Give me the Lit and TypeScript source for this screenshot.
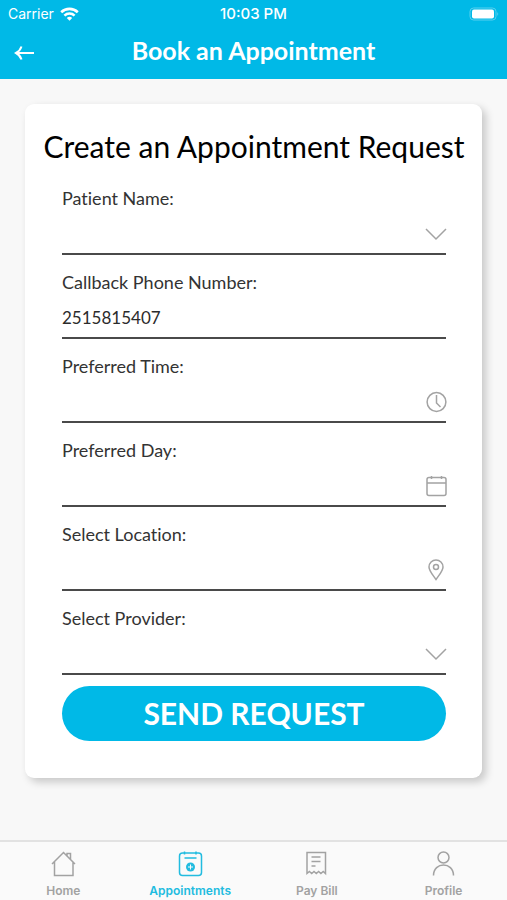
import { LitElement, html, svg, css, nothing } from "lit";
import { customElement, property, state } from "lit/decorators.js";

const icons: Record<string, unknown> = {
  chevron: svg`<path d="M1 6 11 16 21 6" />`,
  clock: svg`<circle cx="11.500" cy="11" r="9.400" /><path d="M11.500 4v8l4 4" />`,
  calendar: svg`<rect x="2" y="2.500" width="19" height="18" rx="2" /><path d="M2 8h19M6.500 1v3M16.500 1v3" />`,
  pin: svg`<path d="M11 20.500C8 16 4 12 4 8a7 7 0 0 1 14 0c0 4-4 8-7 12.500Z" /><circle cx="11" cy="8" r="2.500" />`,
};

const tabIcons: Record<string, unknown> = {
  home: svg`<path d="M2 14 13.500 2.500 25 14M4.500 12v13.500h18.500V12M17 6V3.500h3.500V9" />`,
  appointments: svg`<rect x="2.500" y="3" width="22" height="22.500" rx="3" /><path d="M7.500 1.500v3M19 1.500v3M7.500 8h12" /><circle cx="13.500" cy="17" r="4.500" fill="currentColor" stroke="none" /><path d="M13.500 14.500v5M11 17h5" stroke="#fafafa" stroke-width="1" />`,
  bill: svg`<path d="M4 23.500V2.500h18.500v21l-2.300-2-2.300 2-2.300-2-2.300 2-2.300-2-2.300 2-2.300-2ZM8.500 7h9M8.500 11.500h9M8.500 16h4" />`,
  profile: svg`<circle cx="13.500" cy="7.500" r="5.500" /><path d="M3.500 25.500c0-14 20-14 20 0" />`,
};

@customElement("request-field")
class RequestField extends LitElement {
  @property() label = "";
  @property() kind: "select" | "text" | "tel" = "text";
  @property() icon = "";
  @property() value = "";

  static styles = css`
    :host {
      display: block;
      border-bottom: 2px solid #4a4a4a;
      padding-top: 16px;
    }
    .label {
      display: block;
      font-size: 18px;
      line-height: 22px;
      color: #333;
    }
    .row {
      display: flex;
      align-items: center;
      height: 40px;
      margin-top: 4px;
    }
    .control {
      flex: 1;
      min-width: 0;
      height: 100%;
      padding: 0;
      border: 0;
      background: none;
      appearance: none;
      font: inherit;
      font-size: 17px;
      color: #2b2b2b;
      outline: none;
    }
    .icon {
      flex: none;
      width: 22px;
      height: 22px;
      fill: none;
      stroke: #a3a3a3;
      stroke-width: 1.500;
      overflow: visible;
      pointer-events: none;
    }
  `;

  render() {
    return html`
      <label class="label" for="control">${this.label}</label>
      <div class="row">
        ${this.kind === "select"
          ? html`<select class="control" id="control"><option value=""></option></select>`
          : html`<input class="control" id="control" type=${this.kind} .value=${this.value} />`}
        ${this.icon
          ? html`<svg class="icon" viewBox="-1 -1 22 22" aria-hidden="true">${icons[this.icon]}</svg>`
          : nothing}
      </div>
    `;
  }
}

@customElement("app-root")
class AppRoot extends LitElement {
  @state() active = "appointments";

  private fields = [
    { label: "Patient Name:", kind: "select", icon: "chevron", value: "" },
    { label: "Callback Phone Number:", kind: "tel", icon: "", value: "2515815407" },
    { label: "Preferred Time:", kind: "text", icon: "clock", value: "" },
    { label: "Preferred Day:", kind: "text", icon: "calendar", value: "" },
    { label: "Select Location:", kind: "select", icon: "pin", value: "" },
    { label: "Select Provider:", kind: "select", icon: "chevron", value: "" },
  ];

  private tabs = [
    { id: "home", label: "Home" },
    { id: "appointments", label: "Appointments" },
    { id: "bill", label: "Pay Bill" },
    { id: "profile", label: "Profile" },
  ];

  static styles = css`
    :host {
      display: flex;
      flex-direction: column;
      min-height: 100vh;
      background: #f8f8f8;
      font-family: Lato, "Open Sans", sans-serif;
      font-variant-ligatures: none;
      color: #000;
    }
    .top {
      background: #00b9e7;
      color: #fff;
    }
    .status,
    .bar {
      display: grid;
      grid-template-columns: 1fr auto 1fr;
      align-items: center;
    }
    .status {
      height: 28px;
      padding: 0 8px;
      font: 400 14px/20px Inter, sans-serif;
    }
    .carrier {
      display: flex;
      align-items: center;
      gap: 6px;
    }
    .wifi {
      width: 19px;
      height: 14px;
    }
    .time {
      font-size: 15px;
      font-weight: 500;
    }
    .battery {
      width: 30px;
      height: 14px;
      justify-self: end;
    }
    .bar {
      box-sizing: border-box;
      height: 51px;
      padding: 0 14px 7px;
    }
    .back {
      display: flex;
      justify-self: start;
      padding: 0;
      border: 0;
      background: none;
      color: inherit;
    }
    .arrow {
      width: 22px;
      height: 16px;
      margin-top: 6px;
    }
    .heading {
      margin: 0;
      font-size: 25px;
      line-height: 32px;
      font-weight: 700;
    }
    .main {
      flex: 1;
      padding: 25px;
    }
    .card {
      padding: 20px 36px 37px 37px;
      border-radius: 9px;
      background: #fff;
      box-shadow: 4px 4px 8px rgba(0, 0, 0, 0.2);
    }
    .title {
      margin: 0 -36px 2px;
      font-size: 30px;
      line-height: 45px;
      font-weight: 400;
      text-align: center;
      white-space: nowrap;
    }
    .send {
      display: block;
      width: 100%;
      height: 55px;
      margin-top: 11px;
      padding: 0 0 2px;
      border: 0;
      border-radius: 28px;
      background: #00b9e7;
      color: #fff;
      font: inherit;
      font-size: 30px;
      font-weight: 700;
    }
    .tabs {
      display: grid;
      grid-template-columns: repeat(4, 1fr);
      height: 58px;
      border-top: 2px solid #e2e2e2;
      background: #fafafa;
    }
    .tab {
      display: flex;
      flex-direction: column;
      align-items: center;
      gap: 5px;
      padding-top: 8px;
      color: #a2a2a2;
      font: 600 12px/18px Inter, sans-serif;
      text-decoration: none;
    }
    .tab[aria-current="page"] {
      color: #22bce0;
    }
    .glyph {
      width: 27px;
      height: 27px;
      fill: none;
      stroke: currentColor;
      stroke-width: 1.500;
    }
  `;

  render() {
    return html`
      <header class="top">
        <div class="status">
          <span class="carrier">
            Carrier
            <svg class="wifi" viewBox="0 0 19 14" fill="none" stroke="#fff" stroke-width="2.600" aria-hidden="true">
              <path d="M1.200 5.200a12 12 0 0 1 16.600 0M4.400 8.600a7.400 7.400 0 0 1 10.200 0" />
              <path d="M9.500 13.800 6.800 11a4 4 0 0 1 5.400 0Z" fill="#fff" stroke="none" />
            </svg>
          </span>
          <span class="time">10:03 PM</span>
          <svg class="battery" viewBox="0 0 30 14" aria-hidden="true">
            <rect x="1" y="1" width="26" height="12" rx="3.500" fill="none" stroke="#58d0ef" />
            <rect x="3" y="2.500" width="22" height="9" rx="2" fill="#fff" />
            <path d="M28.500 5v4q1.500-2 0-4" fill="#7fdcf3" />
          </svg>
        </div>
        <div class="bar">
          <button class="back" aria-label="Back">
            <svg class="arrow" viewBox="0 0 22 16" fill="none" stroke="#fff" stroke-width="2" aria-hidden="true">
              <path d="M20 8H3M7.500 1.500Q6 6 2 8q4 2 5.500 6.500" />
            </svg>
          </button>
          <h1 class="heading">Book an Appointment</h1>
        </div>
      </header>
      <main class="main">
        <form class="card" @submit=${(e: Event) => e.preventDefault()}>
          <h2 class="title">Create an Appointment Request</h2>
          ${this.fields.map(
            (f) => html`<request-field
              .label=${f.label}
              .kind=${f.kind as "text"}
              .icon=${f.icon}
              .value=${f.value}
            ></request-field>`
          )}
          <button class="send" type="submit">SEND REQUEST</button>
        </form>
      </main>
      <nav class="tabs">
        ${this.tabs.map(
          (t) => html`<a
            class="tab"
            href="#${t.id}"
            aria-current=${t.id === this.active ? "page" : nothing}
            @click=${() => (this.active = t.id)}
          >
            <svg class="glyph" viewBox="0 0 27 27" aria-hidden="true">${tabIcons[t.id]}</svg>
            ${t.label}
          </a>`
        )}
      </nav>
    `;
  }
}
